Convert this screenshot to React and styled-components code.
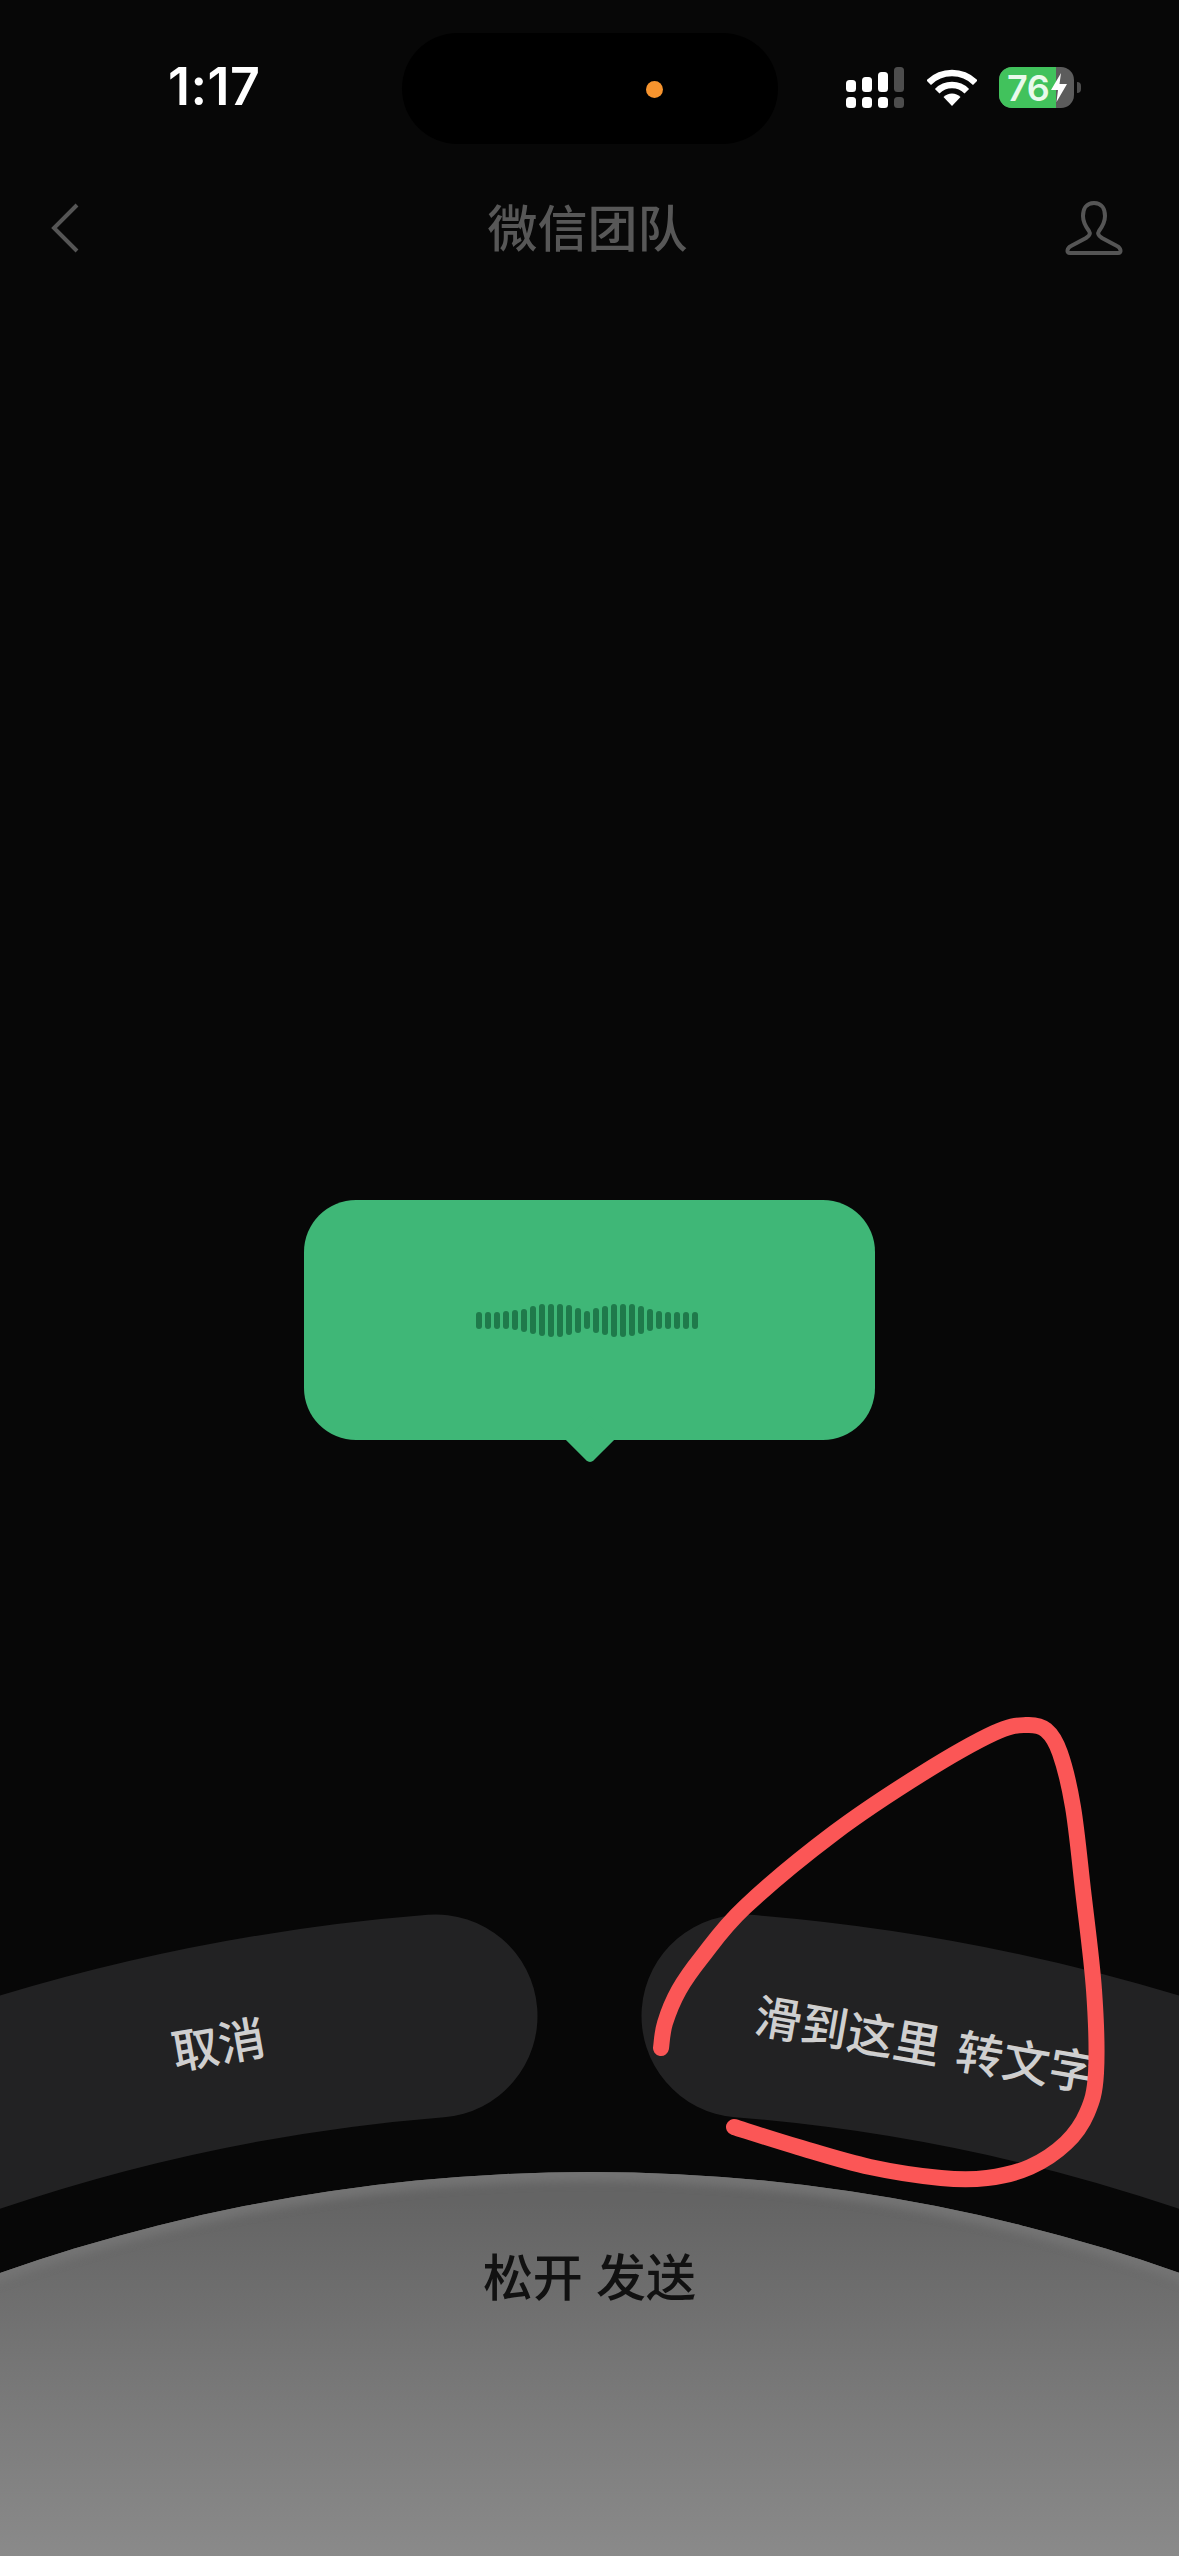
import styled, { createGlobalStyle } from "styled-components";

const CJK = `"Noto Sans CJK SC", "Noto Sans", sans-serif`;

const waveHeights = [
  17, 17, 17, 18, 20, 23, 28, 32, 33, 33, 30, 25, 18, 25, 29, 33, 33, 32, 28, 22,
  18, 17, 17, 17, 17,
];

const signalHeights = [12, 15, 20, 25];

// 红色手绘圈的关键点，运行时转成平滑曲线
const scribble = [
  [661, 2048], [665, 2023], [679, 1990], [702, 1957], [745, 1907], [834, 1833], [923, 1773],
  [994, 1733], [1026, 1725], [1046, 1730], [1060, 1753], [1073, 1807], [1083, 1890],
  [1094, 1990], [1096, 2073], [1087, 2113], [1066, 2143], [1030, 2167], [987, 2178],
  [941, 2178], [870, 2167], [798, 2147], [734, 2127],
];

const smoothPath = (pts) => {
  let d = `M${pts[0][0]} ${pts[0][1]}`;
  for (let i = 0; i < pts.length - 1; i++) {
    const p0 = pts[Math.max(i - 1, 0)];
    const p1 = pts[i];
    const p2 = pts[i + 1];
    const p3 = pts[Math.min(i + 2, pts.length - 1)];
    const c1x = p1[0] + (p2[0] - p0[0]) / 6;
    const c1y = p1[1] + (p2[1] - p0[1]) / 6;
    const c2x = p2[0] - (p3[0] - p1[0]) / 6;
    const c2y = p2[1] - (p3[1] - p1[1]) / 6;
    d += ` C${c1x} ${c1y} ${c2x} ${c2y} ${p2[0]} ${p2[1]}`;
  }
  return d;
};

const GlobalStyle = createGlobalStyle`
  html, body {
    margin: 0;
    padding: 0;
    background: #070707;
  }
`;

const Page = styled.div`
  position: relative;
  width: 1179px;
  height: 2556px;
  display: flex;
  flex-direction: column;
  overflow: hidden;
  background: #070707;
  font-family: ${CJK};
`;

const StatusBar = styled.div`
  display: grid;
  grid-template-columns: 402px 376px 1fr;
  align-items: center;
  padding-top: 33px;
`;

const Time = styled.div`
  padding-left: 168px;
  margin-top: -4px;
  font-family: Inter, "Liberation Sans", sans-serif;
  font-size: 52px;
  font-weight: 600;
  letter-spacing: 0.5px;
  line-height: 1;
  color: #fff;
`;

const Island = styled.div`
  height: 111px;
  display: flex;
  align-items: center;
  justify-content: flex-end;
  padding-right: 115px;
  box-sizing: border-box;
  border-radius: 56px;
  background: #000;
`;

const CameraDot = styled.span`
  width: 17px;
  height: 17px;
  margin-top: 1px;
  border-radius: 50%;
  background: #f7942e;
`;

const StatusIcons = styled.div`
  display: flex;
  align-items: center;
  padding-left: 68px;
  margin-top: -2px;
`;

const Signal = styled.div`
  display: flex;
  gap: 6px;
  margin-right: 23px;
`;

const SignalColumn = styled.div`
  display: flex;
  flex-direction: column;
  justify-content: flex-end;
  gap: 5px;
  width: 10px;
  height: 41px;
`;

const SignalBar = styled.span`
  display: block;
  height: ${(p) => p.$h}px;
  border-radius: 3.5px;
  background: ${(p) => (p.$dim ? "#4d4d4d" : "#fff")};
`;

const Battery = styled.div`
  display: flex;
  align-items: center;
  margin-left: 22px;
  gap: 3px;
`;

const BatteryBody = styled.div`
  position: relative;
  display: flex;
  width: 75px;
  height: 41px;
  border-radius: 13px;
  overflow: hidden;
  background: #5c5c5c;
`;

const BatteryFill = styled.div`
  width: 57px;
  display: flex;
  align-items: center;
  padding-left: 8px;
  box-sizing: border-box;
  background: #41c25c;
  font-family: Inter, "Liberation Sans", sans-serif;
  font-size: 36px;
  font-weight: 600;
  line-height: 1;
  letter-spacing: -0.5px;
  color: #e9faeb;
`;

const BoltIcon = styled.svg`
  position: absolute;
  left: 52px;
  top: 6px;
`;

const BatteryNub = styled.span`
  width: 4px;
  height: 11px;
  border-radius: 0 6px 6px 0;
  background: #4d4d4d;
`;

const NavBar = styled.div`
  display: grid;
  grid-template-columns: 1fr auto 1fr;
  align-items: center;
  height: 168px;
  padding: 0 55px 0 51px;
  color: #555;
`;

const NavTitle = styled.div`
  margin-bottom: 6px;
  font-size: 50px;
  font-weight: 500;
  line-height: 1;
  color: #575757;
`;

const NavLeft = styled.div`
  display: flex;
  justify-content: flex-start;
`;

const NavRight = styled.div`
  display: flex;
  justify-content: flex-end;
`;

const Stage = styled.div`
  flex: 1;
  display: flex;
  justify-content: center;
  padding-top: 888px;
`;

const Bubble = styled.div`
  position: relative;
  width: 571px;
  height: 240px;
  display: flex;
  align-items: center;
  justify-content: center;
  gap: 2.5px;
  padding-right: 5px;
  box-sizing: border-box;
  border-radius: 52px;
  background: #3fb777;

  &::after {
    content: "";
    position: absolute;
    left: 50%;
    bottom: -17px;
    width: 34px;
    height: 34px;
    margin-left: -17px;
    border-bottom-right-radius: 5px;
    background: #3fb777;
    transform: rotate(45deg);
  }
`;

const WaveBar = styled.span`
  width: 6.5px;
  height: ${(p) => p.$h}px;
  border-radius: 3px;
  background: #1f7a4b;
`;

const ActionArea = styled.div`
  position: relative;
  height: 272px;
  display: flex;
  justify-content: space-between;
  align-items: flex-start;
  padding: 110px 80px 0 171px;
  box-sizing: border-box;
`;

const ArcLayer = styled.svg`
  position: absolute;
  left: 0;
  top: 0;
  overflow: visible;
`;

const ActionLabel = styled.div`
  position: relative;
  font-size: 47px;
  font-weight: 500;
  line-height: 64px;
  white-space: pre;
  word-spacing: 6px;
  color: #cfcfcf;
  transform: rotate(${(p) => p.$angle}deg);
`;

const Dome = styled.div`
  position: relative;
  height: 384px;
  display: flex;
  justify-content: center;
  padding-top: 69px;
  box-sizing: border-box;
  overflow: hidden;

  &::before {
    content: "";
    position: absolute;
    top: 0;
    left: 50%;
    width: 3546px;
    height: 3546px;
    margin-left: -1773px;
    border-radius: 50%;
    background: linear-gradient(#646464 30px, #8a8a8a 384px);
    box-shadow: inset 0 14px 8px -5px #747474;
  }
`;

const DomeLabel = styled.div`
  position: relative;
  font-size: 50px;
  font-weight: 500;
  line-height: 66px;
  white-space: pre;
  word-spacing: 2px;
  color: #111;
`;

const Annotation = styled.svg`
  position: absolute;
  left: 0;
  top: 0;
  pointer-events: none;
`;

const App = () => {
  return (
    <Page>
      <GlobalStyle />
      <StatusBar>
        <Time>1:17</Time>
        <Island>
          <CameraDot />
        </Island>
        <StatusIcons>
          <Signal>
            {signalHeights.map((h, i) => (
              <SignalColumn key={i}>
                <SignalBar $h={h} $dim={i === 3} />
                <SignalBar $h={11} $dim={i === 3} />
              </SignalColumn>
            ))}
          </Signal>
          <svg width="50" height="37" viewBox="0 0 50 37" fill="none">
            <path d="M1.7 13.7 A33 33 0 0 1 48.3 13.7" stroke="#fff" strokeWidth="6.5" />
            <path d="M10.2 22.2 A21 21 0 0 1 39.8 22.2" stroke="#fff" strokeWidth="6.5" />
            <path d="M25 37 L16.5 28 A12 12 0 0 1 33.5 28 Z" fill="#fff" />
          </svg>
          <Battery>
            <BatteryBody>
              <BatteryFill>76</BatteryFill>
              <BoltIcon width="16" height="29" viewBox="0 0 16 29">
                <path d="M10 0 L0 17 L7 17 L5.5 29 L16 11 L8.5 11 Z" fill="#fff" />
              </BoltIcon>
            </BatteryBody>
            <BatteryNub />
          </Battery>
        </StatusIcons>
      </StatusBar>

      <NavBar>
        <NavLeft>
          <svg width="28" height="50" viewBox="0 0 28 50" fill="none">
            <path d="M26 2 L3 25 L26 48" stroke="#555" strokeWidth="4" />
          </svg>
        </NavLeft>
        <NavTitle>微信团队</NavTitle>
        <NavRight>
          <svg width="60" height="56" viewBox="0 0 60 56" fill="none">
            <path
              d="M30 3 C22 3 19 9 19 16 C19 23 22 27 25 31 C27 34 25 36 22 38 L7 46 C3 48 2 53 6 53 L54 53 C58 53 57 48 53 46 L38 38 C35 36 33 34 35 31 C38 27 41 23 41 16 C41 9 38 3 30 3 Z"
              stroke="#555"
              strokeWidth="4"
            />
          </svg>
        </NavRight>
      </NavBar>

      <Stage>
        <Bubble>
          {waveHeights.map((h, i) => (
            <WaveBar key={i} $h={h} />
          ))}
        </Bubble>
      </Stage>

      <ActionArea>
        <ArcLayer width="1179" height="400" viewBox="0 1900 1179 400" fill="none">
          <path
            d="M-100 2137 A1935 1935 0 0 1 436 2016"
            stroke="#222223"
            strokeWidth="203"
            strokeLinecap="round"
          />
          <path
            d="M743 2016 A1935 1935 0 0 1 1279 2137"
            stroke="#222223"
            strokeWidth="203"
            strokeLinecap="round"
          />
        </ArcLayer>
        <ActionLabel $angle={-10}>取消</ActionLabel>
        <ActionLabel $angle={10}>滑到这里 转文字</ActionLabel>
      </ActionArea>

      <Dome>
        <DomeLabel>松开 发送</DomeLabel>
      </Dome>

      <Annotation width="1179" height="2556" viewBox="0 0 1179 2556" fill="none">
        <path
          d={smoothPath(scribble)}
          stroke="#fb5656"
          strokeWidth="16"
          strokeLinecap="round"
          strokeLinejoin="round"
        />
      </Annotation>
    </Page>
  );
};

export default App;
